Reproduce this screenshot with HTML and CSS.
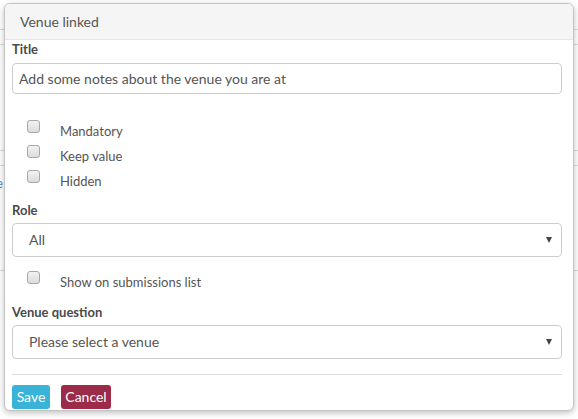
FILE: index.html
```html
<!DOCTYPE html>
<html>
<head>
<meta charset="utf-8">
<link rel="stylesheet" href="styles.css">
</head>
<body>
<div class="page">
  <div class="bg-row r1"></div>
  <div class="bg-row r2"></div>
  <div class="bg-row r3"></div>
  <div class="bg-row r4"></div>
  <div class="bg-row r5"><span class="bg-link">e</span></div>
</div>
<div class="modal">
  <div class="modal-header">Venue linked</div>
  <div class="modal-body">
    <label class="field-label">Title</label>
    <div class="text-input">Add some notes about the venue you are at</div>
    <div class="checks">
      <div class="check-row"><input type="checkbox" class="cb"><span class="cb-label">Mandatory</span></div>
      <div class="check-row"><input type="checkbox" class="cb"><span class="cb-label">Keep value</span></div>
      <div class="check-row"><input type="checkbox" class="cb"><span class="cb-label">Hidden</span></div>
    </div>
    <label class="field-label role">Role</label>
    <div class="select"><span>All</span><span class="caret"></span></div>
    <div class="checks single">
      <div class="check-row"><input type="checkbox" class="cb"><span class="cb-label">Show on submissions list</span></div>
    </div>
    <label class="field-label vq">Venue question</label>
    <div class="select"><span>Please select a venue</span><span class="caret"></span></div>
    <div class="divider"></div>
    <div class="actions">
      <button class="btn btn-save">Save</button>
      <button class="btn btn-cancel">Cancel</button>
    </div>
  </div>
</div>
</body>
</html>
```
FILE: styles.css
```css
* { box-sizing: border-box; }
html, body { margin: 0; padding: 0; }
body {
  width: 578px;
  height: 419px;
  overflow: hidden;
  background: #fff;
  font-family: Lato, "Open Sans", sans-serif;
  color: #555;
  position: relative;
}
.page { display: flex; flex-direction: column; }
.bg-row { border-bottom: 1px solid #dcdcdc; }
.r1 { height: 30px; }
.r2 { height: 15px; }
.r3 { height: 106px; }
.r4 { height: 15px; }
.r5 { height: 105px; padding-top: 6px; }
.bg-link { color: #3a8fd0; font-size: 13px; margin-left: -4px; }

.modal {
  position: absolute;
  left: 4px;
  top: 3px;
  width: 570px;
  height: 408px;
  background: #fff;
  border: 1px solid #c4c4c4;
  border-radius: 6px;
  box-shadow: 0 2px 6px rgba(0,0,0,0.25);
  overflow: hidden;
}
.modal-header {
  height: 36px;
  background: #f5f5f5;
  border-bottom: 1px solid #e6e6e6;
  padding: 0 15px;
  font-size: 14px;
  line-height: 35px;
  color: #555;
}
.modal-body {
  padding: 1px 11px 0 7px;
  display: flex;
  flex-direction: column;
}
.field-label {
  font-size: 13px;
  font-weight: bold;
  line-height: 16px;
  color: #4a4a4a;
}
.text-input {
  margin-top: 6px;
  height: 31px;
  border: 1px solid #cccccc;
  border-radius: 4px;
  padding: 0 6px;
  font-size: 14px;
  line-height: 29px;
  color: #555;
}
.checks { margin-top: 24px; display: flex; flex-direction: column; }
.checks.single { margin-top: 12px; }
.check-row {
  height: 25px;
  display: flex;
  align-items: flex-start;
}
.cb {
  -webkit-appearance: none;
  appearance: none;
  width: 13px;
  height: 13px;
  margin: 2px 0 0 15px;
  border: 1px solid #a8a8a8;
  border-radius: 3px;
  background: linear-gradient(#f2f2f2, #dcdcdc);
}
.cb-label {
  margin-left: 20px;
  margin-top: 5px;
  font-size: 13px;
  line-height: 16px;
  color: #555;
}
.role { margin-top: 9px; }
.vq { margin-top: 10px; }
.select {
  margin-top: 5px;
  height: 34px;
  border: 1px solid #cccccc;
  border-radius: 4px;
  padding: 0 9px 0 16px;
  font-size: 14px;
  line-height: 32px;
  color: #555;
  display: flex;
  justify-content: space-between;
  align-items: center;
}
.caret {
  width: 0;
  height: 0;
  border-left: 3.5px solid transparent;
  border-right: 3.5px solid transparent;
  border-top: 6px solid #444;
}
.divider {
  margin-top: 15px;
  border-top: 1px solid #dddddd;
}
.actions {
  margin-top: 10px;
  display: flex;
  gap: 11px;
}
.btn {
  height: 24px;
  border: none;
  border-radius: 3px;
  color: #fff;
  font-family: Lato, "Open Sans", sans-serif;
  font-size: 14px;
  line-height: 24px;
  padding: 0;
}
.btn-save { width: 38px; background: #39b3d7; }
.btn-cancel { width: 50px; background: #9b2b48; }
```
